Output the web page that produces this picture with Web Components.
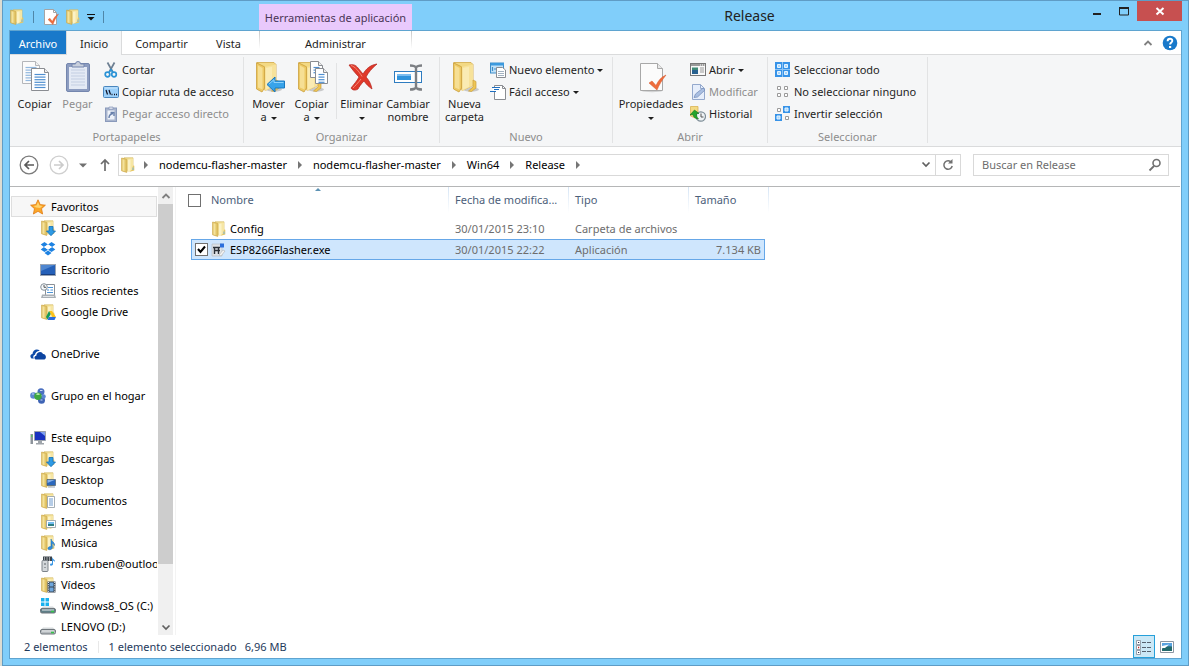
<!DOCTYPE html>
<html lang="es">
<head>
<meta charset="utf-8">
<title>Release</title>
<style>
  html, body { margin: 0; height: 100%; }
  body { font: 11px/16px "Noto Sans", "Open Sans", sans-serif; color: #000; background: #dcdcd2; overflow: hidden; }
</style>
</head>
<body>
<explorer-window></explorer-window>

<script>
const folderSmall = `
  <path d="M4 .8h9v12.500H4z" fill="#f3de92" stroke="#d6ba66" stroke-width=".7"/>
  <path d="M7.500 2l5.500-.6v11.600l-5.500 2z" fill="#f6e6a4"/>
  <path d="M1.600 1l5.200 1.400v13L1.600 13.800z" fill="#e3c668" stroke="#cda84a" stroke-width=".7"/>
  <path d="M2.500 2.200l2 .6v11.200l-2-.6z" fill="#f4e29c"/>
  <path d="M8 3l2.500-.5v11L8 14.500z" fill="#fbf2c6"/>
  <path d="M13 8.500l1.300.3v4.800L9 15l3-2.200z" fill="#e6c866"/><path d="M13 10.500v2.500" stroke="#7bb7e0"/>`;
const folderBig = `
  <ellipse cx="22" cy="28.500" rx="8" ry="2.200" fill="#000" opacity=".18"/>
  <path d="M5 1.500h17l2 2v21l-11 5z" fill="#f3d984" stroke="#d2a846" stroke-width=".8"/>
  <path d="M12.500 6L24 3.500v21L13 30z" fill="#f7e29a"/>
  <path d="M14 7l6-1.300v20L14 28.500z" fill="#fbefbe" opacity=".7"/>
  <path d="M4.500 1.800l8 4V27l-2.500 4-5.500-3z" fill="#edc964" stroke="#cc9f3c" stroke-width=".8"/>
  <path d="M6 4.500l4.500 2.500v21.500L6 26.500z" fill="#f6df94"/>
  <path d="M24 19l3 1.500v6.500l-4.500 3.500-3-.5 4.500-4z" fill="#eec655" stroke="#cc9f3c" stroke-width=".7"/>`;
const sheet = (x, y, w, h, lines) => {
  let s = `<path d="M${x} ${y}h${w - 4}l4 4v${h - 4}h${-w}z" fill="#fff" stroke="#8a8d92"/><path d="M${x + w - 4} ${y}v4h4" fill="#eee" stroke="#8a8d92"/>`;
  for (let i = 0; i < lines; i++) s += `<path d="M${x + 3} ${y + 6 + i * 2.6}h${w - 6}" stroke="#4f8fd0" stroke-width="1.200"/>`;
  return s;
};
const tick = `<path d="M0 8l3-2 4 4.500C9 6 12 2 17 0 13 5 10 10 8 15z" fill="#ee6c3c" stroke="#d4562a" stroke-width=".5"/>`;
const cell = (x, y, on) => on
  ? `<path d="M${x} ${y}h7v7h-7z" fill="#3793e8"/><path d="M${x + 2} ${y + 2}h3v3h-3z" fill="#a8d6fb" stroke="#e6f4ff"/>`
  : `<path d="M${x + 1.5} ${y + 1.5}h3v3h-3z" fill="#fff" stroke="#9a9a9a"/>`;
const drive = `<path d="M3 8.500h10l2.500 2.500H.5z" fill="#d5d9db"/><rect x=".5" y="10.500" width="15" height="4.500" rx="1.500" fill="#b7bcc0" stroke="#6f767c"/><path d="M2 12h12" stroke="#e9ecee"/><path d="M11 13.500h3" stroke="#35c24a" stroke-width="1.600"/>`;

const ICONS = {
  folder: [16, folderSmall],
  folderBig: [32, folderBig],
  propsSmall: [16, `<path d="M1.500.5h9l3 3v12h-12z" fill="#fff" stroke="#a5a5a5"/><path d="M10.500.5v3h3" fill="none" stroke="#a5a5a5"/><g transform="translate(5 5) scale(.62 .7)">${tick}</g>`],
  caretBar: [8, `<path d="M0 1h8v1H0zM.5 4h7L4 7.500z" fill="#111"/>`],
  copyBig: [32, `<g opacity=".6">${sheet(3.500, .5, 17, 22, 6)}</g>` + sheet(12.500, 7.500, 17, 22, 6)],
  pasteBig: [32, `<rect x="4.500" y="2.500" width="23" height="28" rx="1.500" fill="#8c9cc0" stroke="#7486ae"/><path d="M7 6h18v22H7z" fill="#e4eaf5"/><path d="M9 9h14M9 12h14M9 15h14M9 18h14M9 21h14M9 24h14" stroke="#c3cee2"/><path d="M10 6V3h3.500a2.500 2.500 0 0 1 5 0H22v3z" fill="#c9d0dd" stroke="#7486ae"/>`],
  cut: [16, `<path d="M4.500.5L9.800 10M11.500.5L6.200 10" stroke="#6d7f92" stroke-width="1.700"/><circle cx="4.500" cy="12.500" r="2.300" fill="none" stroke="#2b93d6" stroke-width="1.700"/><circle cx="11" cy="12.500" r="2.300" fill="none" stroke="#2b93d6" stroke-width="1.700"/><path d="M6 10.500l2-3 2 3" stroke="#2b93d6" stroke-width="1.400" fill="none"/>`],
  path: [16, `<rect x=".5" y="2.500" width="15" height="11" rx="1" fill="#9cd0fa" stroke="#4a86bd"/><path d="M2 4h12" stroke="#cbe7fd"/><path d="M3 6l1.500 4.500M6 6l1.500 4.500" stroke="#112" stroke-width="1.200"/><path d="M8.500 10.500h1M11 10.500h1M13 10.500h1" stroke="#112" stroke-width="1.300"/>`],
  pasteLink: [16, `<rect x="2.500" y="2" width="11" height="13.500" fill="#a9b5cd" stroke="#8a9abb"/><path d="M4.500 4.500h7v9h-7z" fill="#eef2f9"/><path d="M6 1h4v2.500H6z" fill="#d4dae6" stroke="#8a9abb" stroke-width=".7"/><path d="M6 12c0-3 1-4 4-4.500M7.500 6.500H11V10" fill="none" stroke="#6880ab" stroke-width="1.400"/>`],
  moveBig: [32, `<g transform="translate(-1 0)">${folderBig}</g><path d="M14 23.500l8-7.500v4h9.500v7H22v4z" fill="#37a3ea" stroke="#1978c0"/><path d="M16 23l5-4.300V21.500h9.500" stroke="#8fd2fb" fill="none"/>`],
  copyToBig: [32, `<g transform="translate(-2 0)">${folderBig}</g>${sheet(14.500, .5, 12, 16, 3)}${sheet(19.500, 7.500, 12, 15, 4)}`],
  deleteBig: [32, `<path d="M3 4c4-1 7 0 9 3l5 6C20 8 24 4 31 3c-5 4-9 9-11 13 3 3 5 7 6 12-3-2-6-5-8-8-3 3-5 6-6 8-3 2-6 1-7-1 3-4 6-7 8-11C9 12 6 8 3 4z" fill="#e0392a" stroke="#b3211a" stroke-width=".7"/><path d="M5 4.500c4 1 8 6 11 11M15 18c-3 4-6 7-8 9" stroke="#f58a78" fill="none"/>`],
  renameBig: [32, `<rect x="2.500" y="10.500" width="27" height="11" fill="#fff" stroke="#2e7cc0"/><path d="M5 13h14v6H5z" fill="#2f93dc"/><path d="M5 13h14v2H5z" fill="#7bbdf0"/><path d="M18 4.500c3 0 5 .5 6 2 1-1.500 3-2 6-2M18 28.500c3 0 5-.5 6-2 1 1.500 3 2 6 2M24 6v21" fill="none" stroke="#7c7f83" stroke-width="2.400"/>`],
  newItem: [16, `<rect x=".5" y="1" width="13" height="10" fill="#bfe0f7" stroke="#3c8ecb"/><path d="M1 1h13v2.500H1z" fill="#3c9ade"/><path d="M2.500 5v4M4 7h2" stroke="#3c8ecb" stroke-width="1.200"/><path d="M6.500 5.500h6l3 2.500v7.500h-9z" fill="#fff" stroke="#8a8d92"/><path d="M8 9.500h6M8 11.500h6M8 13.500h6" stroke="#9ab" stroke-width=".9"/>`],
  easyAccess: [16, `<path d="M4.500 1.500h8l3 3v11h-11z" fill="#fff" stroke="#8a8d92"/><path d="M12.500 1.500v3h3" fill="none" stroke="#8a8d92"/><path d="M3 4h8v3H3z" fill="#fff"/><path d="M2 3.500h8M4 5.500h5M0 7.500h6" stroke="#1f6fc0" stroke-width="1.200"/>`],
  propsBig: [32, `<ellipse cx="17" cy="30" rx="10" ry="1.200" opacity=".15"/><path d="M5.500 2.500h17l5 5v22h-22z" fill="#fbfbfb" stroke="#a8a8a8"/><path d="M22.500 2.500v5h5" fill="#e8e8e8" stroke="#a8a8a8"/><g transform="translate(14 14)">${tick}</g>`],
  open: [16, `<rect x=".5" y="1.500" width="15" height="12" fill="#f8f8f8" stroke="#777"/><path d="M1 2h14v2H1z" fill="#9a9a9a"/><path d="M10 3h1M12 3h1M14 3h1" stroke="#fff"/><path d="M2 5.500h6v6.500H2z" fill="#3e8a76"/><path d="M2 8h6v4H2z" fill="#27618f"/><path d="M10 6h4M10 8h4M10 10h4" stroke="#999"/>`],
  edit: [16, `<path d="M2.500.5h8l4 4v11h-12z" fill="#e6eefb" stroke="#94a9cd"/><path d="M10.500.5v4h4" fill="none" stroke="#94a9cd"/><path d="M4 13.500l1.500-3.500L13 4l2 2-7.500 7z" fill="#a9bfe2" stroke="#7990bb" stroke-width=".8"/>`],
  history: [16, `<path d="M.5.5h7.500v10l-3 1.500-4.500-2z" fill="#f4da82" stroke="#d9b455" stroke-width=".8"/><circle cx="10.800" cy="10.500" r="4.700" fill="#eef3f6" stroke="#7c8c96" stroke-width="1.200"/><path d="M11 7.500v3.500h2.500" stroke="#555" fill="none"/><path d="M0 9l4.500-5 4.500 3.500H6.500c0 2.500.5 4 2 5.500-3.500-.5-5.300-2-5.500-4.500z" fill="#25a52c" stroke="#127a18" stroke-width=".6"/>`],
  selAll: [16, `<path d="M0 0h15v15H0z" fill="#3793e8"/><path d="M2.500 2.500h3v3h-3zM9.500 2.500h3v3h-3zM2.500 9.500h3v3h-3zM9.500 9.500h3v3h-3z" fill="#a8d6fb" stroke="#e6f4ff"/><path d="M7.500 0v15M0 7.500h15" stroke="#8cc4f6"/>`],
  selNone: [16, cell(1, 1) + cell(8, 1) + cell(1, 8) + cell(8, 8)],
  selInvert: [16, cell(1, 1) + cell(8, 0, 1) + cell(0, 8, 1) + cell(9, 9)],
  back: [20, `<circle cx="10" cy="10" r="8.800" fill="#fff" stroke="#7b7b7b" stroke-width="1.300"/><path d="M15 10H6M10 6L6 10l4 4" fill="none" stroke="#5a5a5a" stroke-width="1.700"/>`],
  forward: [20, `<circle cx="10" cy="10" r="8.800" fill="#fff" stroke="#cfcfcf" stroke-width="1.300"/><path d="M5 10h9M10 6l4 4-4 4" fill="none" stroke="#cbcbcb" stroke-width="1.700"/>`],
  caretGrey: [8, `<path d="M0 2.500h8L4 6.500z" fill="#707070"/>`],
  up: [16, `<path d="M8 14V3M4 7l4-4 4 4" fill="none" stroke="#6d6d6d" stroke-width="1.700"/>`],
  sep: [8, `<path d="M2 0l4 4-4 4z" fill="#757575"/>`],
  chevDown: [10, `<path d="M1.500 3.500L5 7l3.500-3.500" fill="none" stroke="#606060" stroke-width="1.700"/>`],
  chevUp: [10, `<path d="M1.500 7L5 3.500 8.500 7" fill="none" stroke="#808080" stroke-width="1.800"/>`],
  refresh: [16, `<path d="M11.500 5.500A4.200 4.200 0 1 0 12.200 9" fill="none" stroke="#707070" stroke-width="1.500"/><path d="M12.500 2v4.500H8z" fill="#707070"/>`],
  search: [16, `<circle cx="9.500" cy="6" r="3.500" fill="none" stroke="#707070" stroke-width="1.600"/><path d="M7 9l-4.500 4.500" stroke="#707070" stroke-width="1.800"/>`],
  min: [16, `<path d="M4 10h8v2H4z" fill="#222"/>`],
  max: [16, `<path d="M3.500 5h9v7h-9z" fill="none" stroke="#222"/><path d="M3 4h10v2H3z" fill="#222"/>`],
  close: [16, `<path d="M4.500 5l7 6.500M11.500 5l-7 6.500" stroke="#fff" stroke-width="2"/>`],
  star: [16, `<path d="M8 .8l2.200 4.800 5.200.6-3.900 3.500 1.100 5.300L8 12.300 3.400 15l1.100-5.300L.6 6.200l5.200-.6z" fill="#fba628" stroke="#e07a12" stroke-width=".8"/><path d="M8 3l1.500 3.500 3 .5-2.500 2-4-.5-2.500-1.500 3-.5z" fill="#fed36f"/>`],
  downloads: [16, folderSmall + `<path d="M9 6.500h4V11h2.500L11 15.700 6.500 11H9z" fill="#2e9ae4" stroke="#1470b8" stroke-width=".8"/>`],
  dropbox: [16, `<path d="M4.500 1L8 3.500 4 6 .7 3.500zM11.500 1L8 3.500 12 6l3.300-2.500zM4 6l4 2.700L4.500 11 .7 8.500zM12 6L8 8.700l3.500 2.300 3.800-2.500zM4.500 12L8 9.500l3.500 2.500L8 14.500z" fill="#1d82e2"/><path d="M4 6l4-2.400L12 6 8 8.500z" fill="#fff"/>`],
  desktop: [16, `<rect x=".5" y="2.500" width="15" height="11" fill="#2560b8" stroke="#9aa5b4"/><path d="M1 3h14L1 9z" fill="#4f86d0"/><path d="M1 12.500h14" stroke="#183f80"/>`],
  recent: [16, `<path d="M5.500 1.500h9v11h-9z" fill="#fff" stroke="#8a9097"/><path d="M8 4.500h5M7 7h2M10.500 7h2.500M7 9.500h6" stroke="#4b94d8"/><path d="M2 11.500h13l1 3.500H1z" fill="#a9afb5"/><path d="M3 13.500h11" stroke="#dde1e4"/><circle cx="4" cy="4" r="3.300" fill="#f5f8fa" stroke="#87919a"/><path d="M4 2v2.300h2" fill="none" stroke="#555"/>`],
  gdrive: [16, folderSmall + `<path d="M9 7h3l4 6h-3.500z" fill="#fcc21b"/><path d="M9 7l1.700 3-3 5.500L6 13z" fill="#159957"/><path d="M9 13h7l-1.500 3H7.500z" fill="#2a6de0"/>`],
  onedrive: [16, `<path d="M1.500 12.500C-.5 11 .3 8.300 2.500 8 2.500 4 7 2 9.800 4.700 6.500 5 5.200 7 5 8.700 3 9.200 2.800 11.500 4 12.500z" fill="#0f4ca8"/><path d="M5.500 13.500c-1.800-1-1.200-3.700.8-3.800.2-4.200 5.700-5 6.700-1.700 3-.2 4 4.200 1.500 5.500z" fill="#0c44a0"/>`],
  homegroup: [16, `<circle cx="11" cy="3.800" r="3.500" fill="#4b70c0"/><circle cx="3.500" cy="7.500" r="3.300" fill="#5c86d0"/><circle cx="11.500" cy="12.300" r="3.500" fill="#3f64b5"/><circle cx="13.500" cy="8.500" r="2.300" fill="#5c86d0"/><circle cx="8" cy="8.300" r="3.700" fill="#3fa740"/><path d="M6.500 6.500q1.500-1 3 0" stroke="#c8f0b8" stroke-width="1.300" fill="none"/><path d="M10 2.500h2.500M2 6h2M10.500 12h2" stroke="#c7d8f6"/>`],
  pc: [16, `<path d="M4.500 1.500h11v9h-11z" fill="#1832c0" stroke="#9aa1aa"/><path d="M10 2h5v4z" fill="#7fa0f0"/><path d="M8 11h4v2H8zM6 13h8v1.500H6z" fill="#9fa5ab"/><path d="M.5 4h2.500v10H.5z" fill="#8d949b"/><path d="M1 6h1.500" stroke="#45d04f" stroke-width="1.500"/>`],
  fDesktop: [16, folderSmall + `<path d="M7 7.500h8.500v6H7z" fill="#2b68bd" stroke="#52616f" stroke-width=".7"/><path d="M7.500 8h7l-7 3z" fill="#88b0e6"/><path d="M8 15h7" stroke="#9aa5b4"/>`],
  fDocs: [16, folderSmall + `<path d="M7.500 3.500h7v11h-7z" fill="#fff" stroke="#8f9aa5" stroke-width=".8"/><path d="M9 6h4M9 8h4M9 10h4M9 12h4" stroke="#5b8fc8" stroke-width=".9"/>`],
  fPics: [16, folderSmall + `<path d="M6.500 6.500h9v7h-9z" fill="#fff" stroke="#8f9aa5" stroke-width=".8"/><path d="M8 8h6v2H8z" fill="#74bdf0"/><path d="M8 10h6v2H8z" fill="#2f7f84"/>`],
  fMusic: [16, folderSmall + `<path d="M11 4c.5 3 4 3 3.500 6.500C14 9 13 8.500 12.200 8.300v4.500c0 2-4 2.700-4.200.7 0-1.500 1.700-2.200 3-1.800z" fill="#2e8ee0" stroke="#1769b5" stroke-width=".5"/>`],
  media: [16, `<path d="M3 .5h9v4.500H3z" fill="#3c434a"/><path d="M4 2h1M6.500 2h1M9 2h1M4 4h1M6.500 4h1M9 4h1" stroke="#fff"/><rect x="2" y="4.500" width="6" height="11" rx="1" fill="#d3d7da" stroke="#7c8389"/><path d="M5 7v2M5 11v1" stroke="#5b6269"/><path d="M12 1c.5 2.500 3.500 2.500 3 5-.8-1-1.300-1.300-2-1.500v4c-.5 1.500-3 1.500-3 .2 0-1 1-1.500 2-1.200z" fill="#3a96e4"/>`],
  fVideo: [16, folderSmall + `<path d="M7.500 4.500h8v11h-8z" fill="#39434e"/><path d="M9.500 5.500h4v4h-4zM9.500 10.500h4v4h-4z" fill="#6fa7dd"/><path d="M8.500 5v10M14.700 5v10" stroke="#fff" stroke-dasharray="1 1.200" stroke-width=".9"/>`],
  osDrive: [16, drive.replace('#b7bcc0', '#5f7f88') + `<path d="M1 0h3.500v3.500H1zM5.500 0H9v3.500H5.500zM1 4.500h3.500V8H1zM5.500 4.500H9V8H5.500z" fill="#19b1ee"/>`],
  drive: [16, drive],
  exe: [16, `<path d="M1 2h10v12H1z" fill="#dfe3e7" stroke="#b3b9be" stroke-width=".6"/><path d="M2 5.500h7M3.500 5v7M7.500 5v7M3 8.500h6" stroke="#2c3238" stroke-width="1.400"/><path d="M9 1.500h4v4H9z" fill="#2c6fdc"/><path d="M8 13l4-5 2 1-4 5z" fill="#f3f3f3" stroke="#b0b0b0" stroke-width=".6"/>`],
  sort: [8, `<path d="M1 5h6L4 2z" fill="#5d92b4"/>`],
  details: [16, `<path d="M.5 1.500h4v4h-4zM.5 6.500h4v4h-4zM.5 11.500h4v4h-4z" fill="#fff" stroke="#8d97a3" stroke-width=".9"/><path d="M2 3.500h1.200M2 13.500h1.200" stroke="#335" stroke-width="1.200"/><path d="M2 8.500h1.200" stroke="#c22" stroke-width="1.400"/><path d="M6 3.500h4M11 3.500h4M6 8.500h4M11 8.500h4M6 12.500h4M11 12.500h4" stroke="#56616e" stroke-width="1.200"/>`],
  thumbs: [16, `<path d="M1.500 2.500h13v11h-13z" fill="#fff" stroke="#8d97a3"/><path d="M3 4h10v4H3z" fill="#5aa3e0"/><path d="M3 9.500q4-3 10-2v4.500H3z" fill="#236a6c"/><path d="M3 7l7-1.500-4 3.500H3z" fill="#fff"/>`],
  help: [16, `<circle cx="8" cy="8" r="7.300" fill="#1979ca"/><path d="M5.600 6.200C5.600 2.800 10.500 3 10.300 6c-.1 1.500-2.200 1.700-2.200 3.600" fill="none" stroke="#fff" stroke-width="1.900"/><path d="M7 11h2.200v2H7z" fill="#fff"/>`],
};

const define = (name, html, setup) => {
  const tpl = document.createElement('template');
  tpl.innerHTML = html;
  customElements.define(name, class extends HTMLElement {
    constructor() {
      super();
      this.attachShadow({ mode: 'open' }).append(tpl.content.cloneNode(true));
    }
    connectedCallback() { if (setup) setup.call(this, this.shadowRoot); }
  });
};

const BUTTON = `button { font: inherit; color: inherit; background: none; border: 0; padding: 0; margin: 0; }`;

define('fe-icon', `<style>:host { display: inline-block; flex: none; } svg { display: block; }</style>`, function (root) {
  const [box, art] = ICONS[this.getAttribute('name')];
  const size = this.getAttribute('size') || box;
  root.querySelector('svg')?.remove();
  root.append(document.createRange().createContextualFragment(
    `<svg xmlns="http://www.w3.org/2000/svg" width="${size}" height="${size}" viewBox="0 0 ${box} ${box}" aria-hidden="true">${art}</svg>`));
});

/* Large ribbon command: icon on top, one or two lines of label below. */
define('ribbon-large', `<style>
  :host { display: block; flex: none; padding-top: 2px; color: #1e1e1e; }
  :host([disabled]) { color: #8d8d8d; }
  ${BUTTON}
  button { display: flex; flex-direction: column; align-items: center; width: 100%; gap: 4px; line-height: 13px; text-align: center; white-space: nowrap; }
  i { display: none; width: 0; border: 3px solid transparent; border-top-color: #1e1e1e; border-bottom: 0; margin-left: 4px; vertical-align: middle; }
  :host([menu]) i { display: inline-block; }
  :host([menu=below]) i { margin-left: 0; }
</style><button><slot name="icon"></slot><span><slot></slot><i></i></span></button>`, function (root) {
  root.querySelector('button').disabled = this.hasAttribute('disabled');
});

/* Small ribbon command: icon beside its label. */
define('ribbon-small', `<style>
  :host { display: block; color: #1e1e1e; }
  :host([disabled]) { color: #8d8d8d; }
  ${BUTTON}
  button { display: flex; align-items: center; gap: 3px; height: 22px; white-space: nowrap; }
  i { display: none; border: 3px solid transparent; border-top-color: #1e1e1e; border-bottom: 0; }
  :host([menu]) i { display: block; }
</style><button><slot name="icon"></slot><span><slot></slot></span><i></i></button>`, function (root) {
  root.querySelector('button').disabled = this.hasAttribute('disabled');
});

define('ribbon-group', `<style>
  :host { display: flex; flex-direction: column; box-sizing: border-box; height: 86px; border-right: 1px solid #e2e3e4; }
  .items { flex: 1; display: flex; padding: 2px 4px 0 3px; }
  .label { color: #8d8d8d; text-align: center; line-height: 12px; }
</style><div class="items"><slot></slot></div><div class="label"></div>`, function (root) {
  root.querySelector('.label').textContent = this.getAttribute('label');
});

define('ribbon-panel', `<style>
  :host { display: flex; box-sizing: border-box; height: 92px; padding: 2px 0 3px; background: #f5f6f7; border-bottom: 1px solid #dadbdc; }
  .g1 { width: 234px; } .g2 { width: 196px; } .g3 { width: 173px; } .g4 { width: 155px; } .g5 { width: 160px; }
  .w43 { width: 43px; } .w50 { width: 50px; } .w70 { width: 70px; }
  .stack { margin-left: 4px; }
  .rule { width: 1px; height: 56px; margin: 4px 3px 0; background: #e2e3e4; }
</style>
<ribbon-group class="g1" label="Portapapeles">
  <ribbon-large class="w43"><fe-icon slot="icon" name="copyBig"></fe-icon>Copiar</ribbon-large>
  <ribbon-large class="w43" disabled><fe-icon slot="icon" name="pasteBig"></fe-icon>Pegar</ribbon-large>
  <div class="stack">
    <ribbon-small><fe-icon slot="icon" name="cut"></fe-icon>Cortar</ribbon-small>
    <ribbon-small><fe-icon slot="icon" name="path"></fe-icon>Copiar ruta de acceso</ribbon-small>
    <ribbon-small disabled><fe-icon slot="icon" name="pasteLink"></fe-icon>Pegar acceso directo</ribbon-small>
  </div>
</ribbon-group>
<ribbon-group class="g2" label="Organizar">
  <ribbon-large class="w43" menu><fe-icon slot="icon" name="moveBig"></fe-icon>Mover<br>a</ribbon-large>
  <ribbon-large class="w43" menu><fe-icon slot="icon" name="copyToBig"></fe-icon>Copiar<br>a</ribbon-large>
  <div class="rule"></div>
  <ribbon-large class="w43" menu="below"><fe-icon slot="icon" name="deleteBig"></fe-icon>Eliminar<br></ribbon-large>
  <ribbon-large class="w50"><fe-icon slot="icon" name="renameBig"></fe-icon>Cambiar<br>nombre</ribbon-large>
</ribbon-group>
<ribbon-group class="g3" label="Nuevo">
  <ribbon-large class="w43"><fe-icon slot="icon" name="folderBig"></fe-icon>Nueva<br>carpeta</ribbon-large>
  <div class="stack">
    <ribbon-small menu><fe-icon slot="icon" name="newItem"></fe-icon>Nuevo elemento</ribbon-small>
    <ribbon-small menu><fe-icon slot="icon" name="easyAccess"></fe-icon>Fácil acceso</ribbon-small>
  </div>
</ribbon-group>
<ribbon-group class="g4" label="Abrir">
  <ribbon-large class="w70" menu="below"><fe-icon slot="icon" name="propsBig"></fe-icon>Propiedades<br></ribbon-large>
  <div class="stack">
    <ribbon-small menu><fe-icon slot="icon" name="open"></fe-icon>Abrir</ribbon-small>
    <ribbon-small disabled><fe-icon slot="icon" name="edit"></fe-icon>Modificar</ribbon-small>
    <ribbon-small><fe-icon slot="icon" name="history"></fe-icon>Historial</ribbon-small>
  </div>
</ribbon-group>
<ribbon-group class="g5" label="Seleccionar">
  <div class="stack">
    <ribbon-small><fe-icon slot="icon" name="selAll"></fe-icon>Seleccionar todo</ribbon-small>
    <ribbon-small><fe-icon slot="icon" name="selNone"></fe-icon>No seleccionar ninguno</ribbon-small>
    <ribbon-small><fe-icon slot="icon" name="selInvert"></fe-icon>Invertir selección</ribbon-small>
  </div>
</ribbon-group>`);

define('title-bar', `<style>
  :host { display: flex; height: 29px; }
  ${BUTTON}
  .quick { box-sizing: border-box; width: 250px; padding: 2px 0 0; display: flex; align-items: center; gap: 6px; }
  .quick button { display: flex; }
  .quick i { width: 1px; height: 12px; background: #4f86a8; margin: 0 3px 0 2px; }
  .context { width: 153px; margin-top: 3px; background: #e9c9fc; color: #4a3556; text-align: center; line-height: 28px; white-space: nowrap; }
  h1 { flex: 1; margin: 0 0 0 4px; font-size: 14px; line-height: 29px; font-weight: 400; text-align: center; color: #222; }
  .win { display: flex; height: 20px; }
  .win button { width: 27px; display: flex; justify-content: center; align-items: center; }
  .win .close { width: 45px; background: #c75050; }
</style>
<div class="quick">
  <button aria-label="Menú"><fe-icon name="folder"></fe-icon></button><i></i>
  <button aria-label="Propiedades"><fe-icon name="propsSmall"></fe-icon></button>
  <button aria-label="Nueva carpeta"><fe-icon name="folder"></fe-icon></button>
  <button aria-label="Personalizar"><fe-icon name="caretBar"></fe-icon></button><i></i>
</div>
<div class="context">Herramientas de aplicación</div>
<h1>Release</h1>
<div class="win">
  <button aria-label="Minimizar"><fe-icon name="min"></fe-icon></button>
  <button aria-label="Maximizar"><fe-icon name="max"></fe-icon></button>
  <button class="close" aria-label="Cerrar"><fe-icon name="close"></fe-icon></button>
</div>`);

define('ribbon-tabs', `<style>
  :host { display: flex; box-sizing: border-box; height: 24px; background: linear-gradient(#dadbdc, #dadbdc) bottom / 100% 1px no-repeat #fff; color: #1e1e1e; }
  ${BUTTON}
  button { line-height: 25px; }
  .file { width: 56px; height: 23px; background: #1979ca; color: #fff; }
  .home { box-sizing: border-box; width: 56px; background: #f5f6f7; border: 1px solid #dadbdc; border-width: 0 1px; }
  .share { width: 79px; } .view { width: 55px; margin-right: 3px; }
  .manage { box-sizing: border-box; width: 153px; background: linear-gradient(#c8c8c8, #fff) left top / 1px 18px no-repeat, linear-gradient(#c8c8c8, #fff) right top / 1px 18px no-repeat; }
  .end { margin-left: auto; display: flex; align-items: center; gap: 9px; padding-right: 3px; }
  .end button { display: flex; }
</style>
<button class="file">Archivo</button><button class="home">Inicio</button><button class="share">Compartir</button><button class="view">Vista</button><button class="manage">Administrar</button>
<div class="end"><button aria-label="Minimizar la cinta"><fe-icon name="chevUp"></fe-icon></button><button aria-label="Ayuda"><fe-icon name="help"></fe-icon></button></div>`);

define('address-bar', `<style>
  :host { display: flex; align-items: center; box-sizing: border-box; height: 40px; padding: 0 11px 3px 9px; border-bottom: 1px solid #b5b6b7; margin-right: 1px; }
  ${BUTTON}
  .nav { display: flex; align-items: center; margin-right: 5px; gap: 10px; }
  .nav button { display: flex; }
  .path { flex: 1; display: flex; align-items: center; border: 1px solid #d9d9d9; height: 20px; padding-left: 1px; white-space: nowrap; }
  a { color: #000; text-decoration: none; }
  .path > fe-icon[name=sep] { padding: 0 9px; }
  .path > fe-icon[name=folder] { margin-right: -3px; }
  .drop { margin-left: auto; padding: 0 4px; }
  .go { width: 25px; height: 20px; border-left: 1px solid #d9d9d9; display: flex; align-items: center; justify-content: center; }
  label { display: flex; align-items: center; box-sizing: border-box; width: 196px; height: 22px; border: 1px solid #d9d9d9; margin-left: 12px; padding: 0 5px 0 8px; }
  input { flex: 1; min-width: 0; border: 0; padding: 0; outline: 0; font: inherit; background: none; }
  input::placeholder { color: #6d6d6d; opacity: 1; }
</style>
<div class="nav">
  <button aria-label="Atrás"><fe-icon name="back"></fe-icon></button>
  <button aria-label="Adelante"><fe-icon name="forward"></fe-icon></button>
  <button aria-label="Ubicaciones recientes"><fe-icon name="caretGrey"></fe-icon></button>
  <button aria-label="Subir"><fe-icon name="up"></fe-icon></button>
</div>
<div class="path">
  <fe-icon name="folder"></fe-icon><fe-icon name="sep"></fe-icon>
  <a href="#">nodemcu-flasher-master</a><fe-icon name="sep"></fe-icon>
  <a href="#">nodemcu-flasher-master</a><fe-icon name="sep"></fe-icon>
  <a href="#">Win64</a><fe-icon name="sep"></fe-icon>
  <a href="#">Release</a><fe-icon name="sep"></fe-icon>
  <button class="drop" aria-label="Ubicaciones anteriores"><fe-icon name="chevDown"></fe-icon></button>
  <button class="go" aria-label="Actualizar"><fe-icon name="refresh"></fe-icon></button>
</div>
<label><input type="search" placeholder="Buscar en Release" aria-label="Buscar en Release"><fe-icon name="search"></fe-icon></label>`);

define('nav-item', `<style>
  :host { display: block; margin-left: 1px; }
  a { display: flex; align-items: center; gap: 5px; box-sizing: border-box; height: 21px; padding-left: 29px; color: #000; text-decoration: none; white-space: nowrap; overflow: hidden; }
  :host([root]) a { padding-left: 19px; }
  :host([current]) a { background: #f7f7f7; border: 1px solid #dedede; padding-left: 18px; }
</style><a href="#"><slot name="icon"></slot><span><slot></slot></span></a>`);

const NAV = [
  ['Favoritos', 'star', [['Descargas', 'downloads'], ['Dropbox', 'dropbox'], ['Escritorio', 'desktop'], ['Sitios recientes', 'recent'], ['Google Drive', 'gdrive']]],
  ['OneDrive', 'onedrive', []],
  ['Grupo en el hogar', 'homegroup', []],
  ['Este equipo', 'pc', [['Descargas', 'downloads'], ['Desktop', 'fDesktop'], ['Documentos', 'fDocs'], ['Imágenes', 'fPics'], ['Música', 'fMusic'], ['rsm.ruben@outlook', 'media'], ['Vídeos', 'fVideo'], ['Windows8_OS (C:)', 'osDrive'], ['LENOVO (D:)', 'drive']]],
];
const navItem = ([text, icon], attrs = '') => `<nav-item ${attrs}><fe-icon slot="icon" name="${icon}"></fe-icon>${text}</nav-item>`;

define('nav-pane', `<style>
  :host { display: flex; width: 165px; border-right: 1px solid #f3f3f3; min-height: 0; }
  ${BUTTON}
  nav { flex: 1; min-width: 0; padding-top: 9px; overflow: hidden; }
  section { margin-bottom: 21px; }
  .bar { width: 15px; margin: 0 2px 0 1px; display: flex; flex-direction: column; background: #f0f0f0; }
  .bar button { height: 17px; display: flex; align-items: center; justify-content: center; }
  .track { flex: 1; }
  .thumb { height: 87%; background: #cdcdcd; }
</style>
<nav aria-label="Panel de navegación">${NAV.map((g, i) => `<section>${navItem(g, i ? 'root' : 'root current')}${g[2].map(x => navItem(x)).join('')}</section>`).join('')}</nav>
<div class="bar">
  <button aria-label="Desplazar arriba"><fe-icon name="chevUp"></fe-icon></button>
  <div class="track"><div class="thumb"></div></div>
  <button aria-label="Desplazar abajo"><fe-icon name="chevDown"></fe-icon></button>
</div>`);

define('file-list', `<style>
  :host { display: block; flex: 1; min-width: 0; padding-left: 12px; }
  table { border-collapse: collapse; table-layout: fixed; width: 581px; }
  .c1 { width: 23px; } .c2 { width: 238px; } .c3, .c4 { width: 120px; } .c5 { width: 80px; }
  th { position: relative; height: 26px; padding: 0 0 0 6px; font-weight: 400; color: #4c607a; text-align: left; white-space: nowrap; }
  th:first-child, th:nth-child(2) { padding-left: 0; }
  th:nth-child(n+2) { background: linear-gradient(#d6e5f5, #fff) right / 1px 100% no-repeat; }
  th fe-icon { position: absolute; top: -1px; left: 103px; }
  td { height: 21px; padding: 0 0 0 6px; color: #6d6d6d; white-space: nowrap; }
  td:first-child { padding-left: 7px; }
  td:nth-child(2) { padding-left: 0; color: #000; }
  td:last-child { text-align: right; padding-right: 8px; }
  tbody::before { content: ""; display: block; height: 5px; }
  tbody { position: relative; z-index: 0; }
  tr { position: relative; }
  .sel td:first-child::before { content: ""; position: absolute; z-index: -1; inset: 0 4px 0 3px; background: #cfe6fd; border: 1px solid #66a7e8; }
  .name { display: flex; align-items: center; gap: 3px; }
  input { appearance: none; display: block; box-sizing: border-box; width: 13px; height: 13px; margin: 0; border: 1px solid #707070; background: #fff; }
  input:checked { background: #fff url('data:image/svg+xml,<svg xmlns="http://www.w3.org/2000/svg" viewBox="0 0 11 11"><path d="M2 5l2.500 3L9 2.500" fill="none" stroke="black" stroke-width="2"/></svg>'); }
  .none { visibility: hidden; }
</style>
<table>
  <colgroup><col class="c1"><col class="c2"><col class="c3"><col class="c4"><col class="c5"></colgroup>
  <thead><tr><th><input type="checkbox" aria-label="Seleccionar todo"></th><th>Nombre<fe-icon name="sort"></fe-icon></th><th>Fecha de modifica...</th><th>Tipo</th><th>Tamaño</th></tr></thead>
  <tbody>
    <tr><td><input class="none" type="checkbox" aria-label="Config"></td><td><div class="name"><fe-icon name="folder"></fe-icon>Config</div></td><td>30/01/2015 23:10</td><td>Carpeta de archivos</td><td></td></tr>
    <tr class="sel"><td><input type="checkbox" checked aria-label="ESP8266Flasher.exe"></td><td><div class="name"><fe-icon name="exe"></fe-icon>ESP8266Flasher.exe</div></td><td>30/01/2015 22:22</td><td>Aplicación</td><td>7.134 KB</td></tr>
  </tbody>
</table>`);

define('status-bar', `<style>
  :host { display: flex; height: 23px; line-height: 24px; color: #1e395b; padding-left: 14px; }
  ${BUTTON}
  .sep { width: 1px; height: 12px; margin: 6px 10px; background: #e8e8e8; }
  .size { margin-left: 8px; }
  .views { margin-left: auto; display: flex; padding-right: 2px; }
  .views button { box-sizing: border-box; width: 24px; height: 23px; display: flex; align-items: center; justify-content: center; }
  .views .on { width: 22px; background: #cbe8f6; border: 1px solid #26a0da; }
</style>
<span>2 elementos</span><span class="sep"></span><span>1 elemento seleccionado</span><span class="size">6,96 MB</span>
<div class="views"><button class="on" aria-label="Detalles"><fe-icon name="details"></fe-icon></button><button aria-label="Iconos grandes"><fe-icon name="thumbs"></fe-icon></button></div>`);

define('explorer-window', `<style>
  :host { display: flex; flex-direction: column; box-sizing: border-box; height: 100vh; margin-left: 2px; border: 1px solid #5f9cc5; background: #80cefa; padding: 0 6px 6px; }
  main { flex: 1; min-height: 0; display: flex; flex-direction: column; background: #fff; border: 1px solid #5fa4d0; }
  .body { flex: 1; min-height: 0; display: flex; }
</style>
<title-bar></title-bar>
<main>
  <ribbon-tabs></ribbon-tabs>
  <ribbon-panel></ribbon-panel>
  <address-bar></address-bar>
  <div class="body"><nav-pane></nav-pane><file-list></file-list></div>
  <status-bar></status-bar>
</main>`);
</script>
</body>
</html>
